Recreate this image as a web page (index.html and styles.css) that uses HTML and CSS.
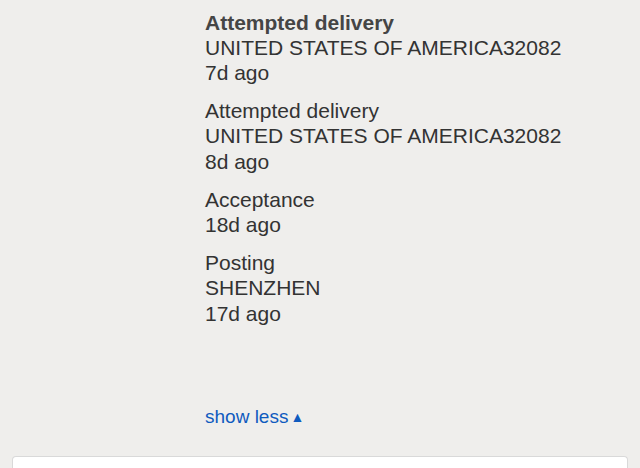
FILE: index.html
```html
<!DOCTYPE html>
<html>
<head>
<meta charset="utf-8">
<link rel="stylesheet" href="styles.css">
</head>
<body>
<div class="page">
  <ul class="events">
    <li class="event">
      <div class="title strong">Attempted delivery</div>
      <div class="line">UNITED STATES OF AMERICA32082</div>
      <div class="line">7d ago</div>
    </li>
    <li class="event">
      <div class="title">Attempted delivery</div>
      <div class="line">UNITED STATES OF AMERICA32082</div>
      <div class="line">8d ago</div>
    </li>
    <li class="event">
      <div class="title">Acceptance</div>
      <div class="line">18d ago</div>
    </li>
    <li class="event">
      <div class="title">Posting</div>
      <div class="line">SHENZHEN</div>
      <div class="line">17d ago</div>
    </li>
  </ul>
  <a class="toggle" href="#">show less<span class="tri">▲</span></a>
  <div class="card"></div>
</div>
</body>
</html>
```
FILE: styles.css
```css
html, body {
  margin: 0;
  padding: 0;
  background: #efeeec;
  overflow: hidden;
}
.page {
  width: 640px;
  height: 468px;
  font-family: "Liberation Sans", Arial, sans-serif;
  color: #333333;
  display: flex;
  flex-direction: column;
}
.events {
  list-style: none;
  margin: 0;
  padding: 9.5px 0 0 205px;
  display: flex;
  flex-direction: column;
  gap: 12.7px;
}
.event {
  font-size: 21px;
  line-height: 25.3px;
}
.strong {
  font-weight: bold;
  color: #454545;
}
.toggle {
  margin: 78px 0 0 205px;
  font-size: 19px;
  line-height: 25px;
  color: #0f5bbf;
  text-decoration: none;
  align-self: flex-start;
}
.tri {
  font-size: 14px;
  margin-left: 2px;
  vertical-align: 1px;
}
.card {
  margin: 26.5px 12px 0 12px;
  flex: 1;
  background: #ffffff;
  border: 1px solid #d9d9d9;
  border-bottom: none;
  border-radius: 4px 4px 0 0;
}
```
